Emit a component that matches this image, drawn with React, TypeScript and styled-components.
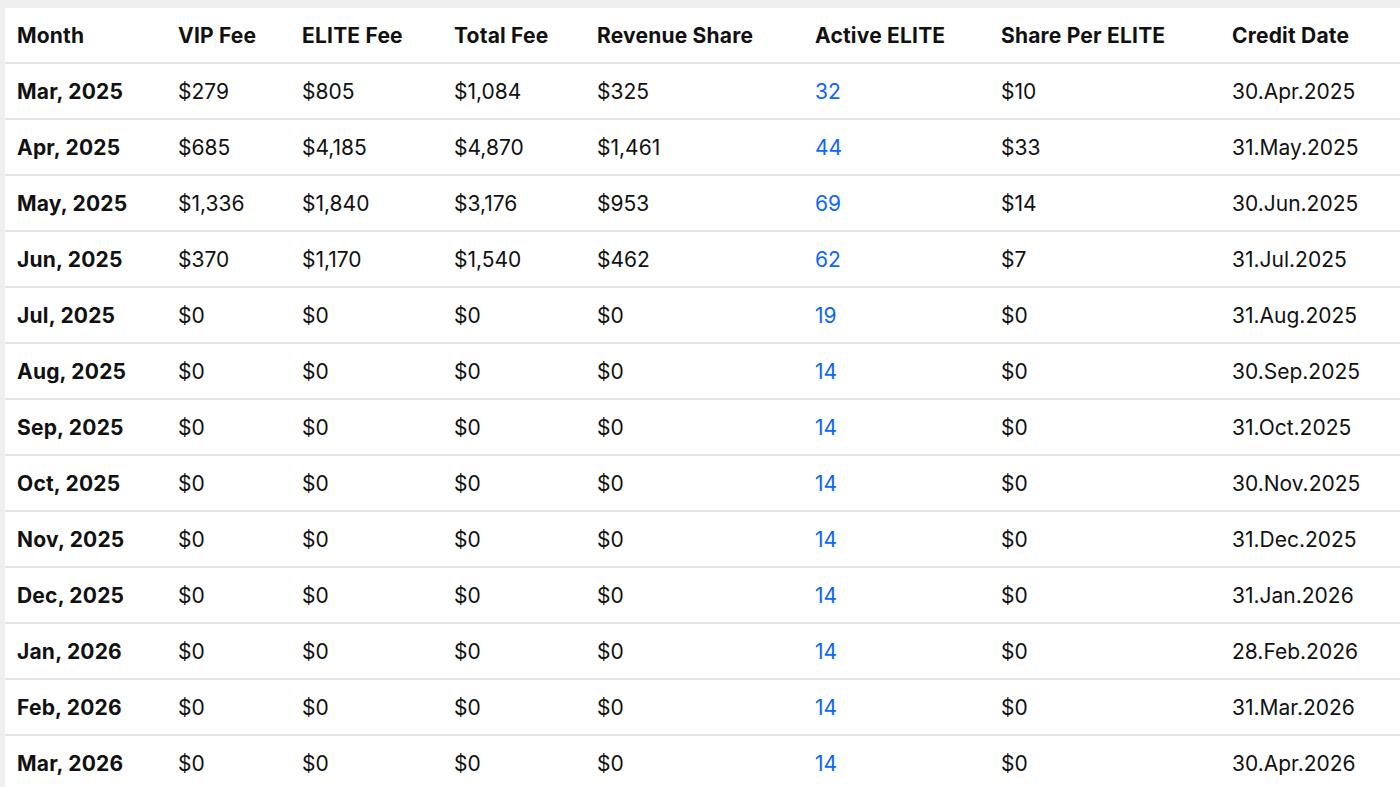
import React from 'react';
import styled, { createGlobalStyle } from 'styled-components';

const GlobalStyle = createGlobalStyle`
  html, body {
    margin: 0;
    padding: 0;
    background: #efefef;
    overflow: hidden;
  }
  body {
    font-family: Inter, "Noto Sans", "Liberation Sans", sans-serif;
    color: #111;
  }
`;

interface Row {
  month: string;
  vip: string;
  elite: string;
  total: string;
  share: string;
  active: number;
  perElite: string;
  credit: string;
}

const rows: Row[] = [
  { month: 'Mar, 2025', vip: '$279', elite: '$805', total: '$1,084', share: '$325', active: 32, perElite: '$10', credit: '30.Apr.2025' },
  { month: 'Apr, 2025', vip: '$685', elite: '$4,185', total: '$4,870', share: '$1,461', active: 44, perElite: '$33', credit: '31.May.2025' },
  { month: 'May, 2025', vip: '$1,336', elite: '$1,840', total: '$3,176', share: '$953', active: 69, perElite: '$14', credit: '30.Jun.2025' },
  { month: 'Jun, 2025', vip: '$370', elite: '$1,170', total: '$1,540', share: '$462', active: 62, perElite: '$7', credit: '31.Jul.2025' },
  { month: 'Jul, 2025', vip: '$0', elite: '$0', total: '$0', share: '$0', active: 19, perElite: '$0', credit: '31.Aug.2025' },
  { month: 'Aug, 2025', vip: '$0', elite: '$0', total: '$0', share: '$0', active: 14, perElite: '$0', credit: '30.Sep.2025' },
  { month: 'Sep, 2025', vip: '$0', elite: '$0', total: '$0', share: '$0', active: 14, perElite: '$0', credit: '31.Oct.2025' },
  { month: 'Oct, 2025', vip: '$0', elite: '$0', total: '$0', share: '$0', active: 14, perElite: '$0', credit: '30.Nov.2025' },
  { month: 'Nov, 2025', vip: '$0', elite: '$0', total: '$0', share: '$0', active: 14, perElite: '$0', credit: '31.Dec.2025' },
  { month: 'Dec, 2025', vip: '$0', elite: '$0', total: '$0', share: '$0', active: 14, perElite: '$0', credit: '31.Jan.2026' },
  { month: 'Jan, 2026', vip: '$0', elite: '$0', total: '$0', share: '$0', active: 14, perElite: '$0', credit: '28.Feb.2026' },
  { month: 'Feb, 2026', vip: '$0', elite: '$0', total: '$0', share: '$0', active: 14, perElite: '$0', credit: '31.Mar.2026' },
  { month: 'Mar, 2026', vip: '$0', elite: '$0', total: '$0', share: '$0', active: 14, perElite: '$0', credit: '30.Apr.2026' },
];

const columns = [
  { label: 'Month', width: 161 },
  { label: 'VIP Fee', width: 124 },
  { label: 'ELITE Fee', width: 152 },
  { label: 'Total Fee', width: 143 },
  { label: 'Revenue Share', width: 218 },
  { label: 'Active ELITE', width: 186 },
  { label: 'Share Per ELITE', width: 231 },
  { label: 'Credit Date', width: 200 },
];

const App = (): JSX.Element => {
  return (
    <>
      <GlobalStyle />
      <Page>
        <Card>
          <StyledTable>
            <colgroup>
              {columns.map((c) => <col key={c.label} style={{ width: c.width }} />)}
            </colgroup>
            <thead>
              <tr>
                {columns.map((c) => <HeadCell key={c.label}>{c.label}</HeadCell>)}
              </tr>
            </thead>
            <tbody>
              {rows.map((r, i) => (
                <BodyRow key={i}>
                  <Cell $bold>{r.month}</Cell>
                  <Cell>{r.vip}</Cell>
                  <Cell>{r.elite}</Cell>
                  <Cell>{r.total}</Cell>
                  <Cell>{r.share}</Cell>
                  <Cell $accent>{r.active}</Cell>
                  <Cell>{r.perElite}</Cell>
                  <Cell>{r.credit}</Cell>
                </BodyRow>
              ))}
            </tbody>
          </StyledTable>
        </Card>
      </Page>
    </>
  );
};

export default App;

const Page = styled.div`
  width: 1400px;
  height: 787px;
  padding: 8px 0 0 5px;
  box-sizing: border-box;
  overflow: hidden;
`;

const Card = styled.div`
  background: #fff;
  width: 1420px;
  min-height: 800px;
`;

const StyledTable = styled.table`
  border-collapse: collapse;
  table-layout: fixed;
  width: 1415px;
  font-size: 21px;
  line-height: 26px;
`;

const HeadCell = styled.th`
  text-align: left;
  font-weight: 700;
  letter-spacing: 0.2px;
  height: 52px;
  padding: 2px 12px 0;
  border-bottom: 2px solid #e1e4e8;
  white-space: nowrap;
`;

const BodyRow = styled.tr`
  border-bottom: 2px solid #e1e4e8;
`;

const Cell = styled.td<{ $bold?: boolean; $accent?: boolean }>`
  height: 52px;
  padding: 2px 12px 0;
  white-space: nowrap;
  font-weight: ${({ $bold }) => ($bold ? 700 : 400)};
  letter-spacing: ${({ $bold }) => ($bold ? '0.2px' : '0')};
  color: ${({ $accent }) => ($accent ? '#0a66ff' : '#111')};
`;
